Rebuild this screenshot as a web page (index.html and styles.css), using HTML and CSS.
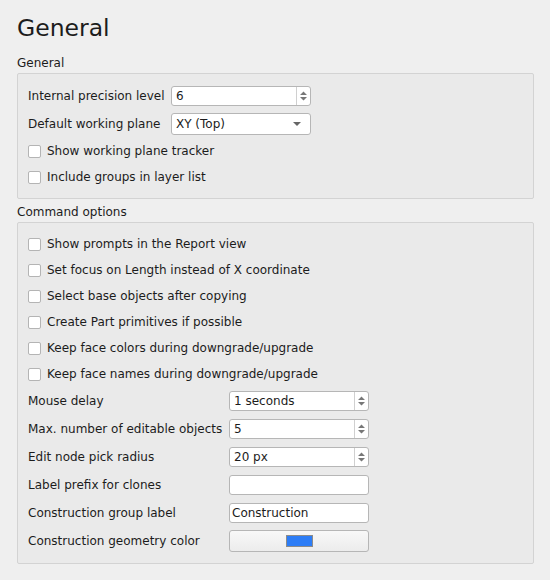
FILE: index.html
```html
<!DOCTYPE html>
<html>
<head>
<meta charset="utf-8">
<link rel="stylesheet" href="styles.css">
</head>
<body>
<div class="page">
  <h1 class="title">General</h1>

  <div class="group-label">General</div>
  <div class="group">
    <div class="row row-w">
      <span class="label lbl-a">Internal precision level</span>
      <div class="field spin w-a"><span class="val">6</span><span class="arrows"><svg width="9" height="12" viewBox="0 0 9 12"><path d="M1 5 L4.5 1.5 L8 5 Z M1 7 L4.5 10.5 L8 7 Z" fill="#777"/></svg></span></div>
    </div>
    <div class="row row-w">
      <span class="label lbl-a">Default working plane</span>
      <div class="field combo w-a"><span class="val">XY (Top)</span><svg class="drop" width="10" height="6" viewBox="0 0 10 6"><path d="M1 1 L9 1 L5 5 Z" fill="#666"/></svg></div>
    </div>
    <div class="row row-c"><span class="cb"></span><span class="label">Show working plane tracker</span></div>
    <div class="row row-c"><span class="cb"></span><span class="label">Include groups in layer list</span></div>
  </div>

  <div class="group-label">Command options</div>
  <div class="group">
    <div class="row row-c"><span class="cb"></span><span class="label">Show prompts in the Report view</span></div>
    <div class="row row-c"><span class="cb"></span><span class="label">Set focus on Length instead of X coordinate</span></div>
    <div class="row row-c"><span class="cb"></span><span class="label">Select base objects after copying</span></div>
    <div class="row row-c"><span class="cb"></span><span class="label">Create Part primitives if possible</span></div>
    <div class="row row-c"><span class="cb"></span><span class="label">Keep face colors during downgrade/upgrade</span></div>
    <div class="row row-c"><span class="cb"></span><span class="label">Keep face names during downgrade/upgrade</span></div>
    <div class="row row-w">
      <span class="label lbl-b">Mouse delay</span>
      <div class="field spin w-b"><span class="val">1 seconds</span><span class="arrows"><svg width="9" height="12" viewBox="0 0 9 12"><path d="M1 5 L4.5 1.5 L8 5 Z M1 7 L4.5 10.5 L8 7 Z" fill="#777"/></svg></span></div>
    </div>
    <div class="row row-w">
      <span class="label lbl-b">Max. number of editable objects</span>
      <div class="field spin w-b"><span class="val">5</span><span class="arrows"><svg width="9" height="12" viewBox="0 0 9 12"><path d="M1 5 L4.5 1.5 L8 5 Z M1 7 L4.5 10.5 L8 7 Z" fill="#777"/></svg></span></div>
    </div>
    <div class="row row-w">
      <span class="label lbl-b">Edit node pick radius</span>
      <div class="field spin w-b"><span class="val">20 px</span><span class="arrows"><svg width="9" height="12" viewBox="0 0 9 12"><path d="M1 5 L4.5 1.5 L8 5 Z M1 7 L4.5 10.5 L8 7 Z" fill="#777"/></svg></span></div>
    </div>
    <div class="row row-w">
      <span class="label lbl-b">Label prefix for clones</span>
      <div class="field text w-b"></div>
    </div>
    <div class="row row-w">
      <span class="label lbl-b">Construction group label</span>
      <div class="field text w-b"><span class="val tight">Construction</span></div>
    </div>
    <div class="row row-w">
      <span class="label lbl-b">Construction geometry color</span>
      <div class="field button w-b"><span class="swatch"></span></div>
    </div>
  </div>
</div>
</body>
</html>
```

FILE: styles.css
```css
html, body {
  margin: 0;
  padding: 0;
  background: #efefef;
}
body {
  font-family: "DejaVu Sans", sans-serif;
  font-size: 12px;
  color: #1c1c1c;
}
.page {
  width: 550px;
  height: 580px;
  box-sizing: border-box;
  padding: 10px 16px 0 17px;
}
.title {
  margin: 0;
  font-weight: normal;
  font-size: 23.5px;
  line-height: 36px;
  height: 44px;
}
.group-label {
  height: 19px;
  line-height: 18px;
  font-size: 12px;
  color: #1c1c1c;
}
.group {
  border: 1px solid #d3d3d3;
  background: #eaeaea;
  border-radius: 2px;
  padding: 8px 10px;
  margin-bottom: 4px;
}
.row {
  display: flex;
  align-items: center;
}
.row-w { height: 28px; }
.row-c { height: 26px; }
.label { white-space: nowrap; }
.lbl-a { width: 143px; flex: none; }
.lbl-b { width: 201px; flex: none; }
.cb {
  width: 11px;
  height: 11px;
  border: 1px solid #b4b4b4;
  border-radius: 2px;
  background: #fff;
  margin-right: 6px;
  flex: none;
}
.field {
  box-sizing: border-box;
  height: 20px;
  border: 1px solid #b6b6b6;
  border-radius: 3px;
  background: #fff;
  display: flex;
  align-items: center;
  position: relative;
}
.w-a { width: 140px; }
.w-b { width: 140px; }
.val {
  padding-left: 4px;
  flex: 1;
  line-height: 18px;
}
.val.tight { padding-left: 2px; }
.arrows {
  width: 13px;
  height: 18px;
  border-left: 1px solid #d0d0d0;
  display: flex;
  align-items: center;
  justify-content: center;
}
.combo { height: 22px; }
.combo .drop { margin-right: 8px; }
.button {
  background: linear-gradient(#f8f8f8, #ececec);
  justify-content: center;
  height: 22px;
}
.swatch {
  width: 27px;
  height: 12px;
  background: #2d7df6;
  border: 1px solid #8b8b8b;
  box-sizing: border-box;
}
```
